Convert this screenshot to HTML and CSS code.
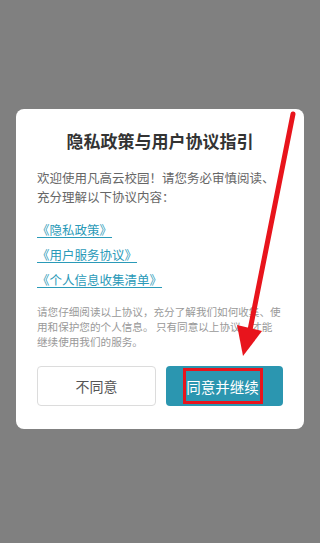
FILE: index.html
```html
<!DOCTYPE html>
<html lang="zh-CN">
<head>
<meta charset="utf-8">
<title>隐私政策与用户协议指引</title>
<link rel="stylesheet" href="styles.css">
</head>
<body>
<div class="screen">
  <div class="card">
    <h1 class="title">隐私政策与用户协议指引</h1>
    <p class="intro">欢迎使用凡高云校园！请您务必审慎阅读、充分理解以下协议内容：</p>
    <ul class="links">
      <li><a class="link" href="#">《隐私政策》</a></li>
      <li><a class="link" href="#">《用户服务协议》</a></li>
      <li><a class="link" href="#">《个人信息收集清单》</a></li>
    </ul>
    <p class="note">请您仔细阅读以上协议，充分了解我们如何收集、使<br>用和保护您的个人信息。 只有同意以上协议，才能<br>继续使用我们的服务。</p>
    <div class="actions">
      <button class="btn btn-decline">不同意</button>
      <button class="btn btn-accept"><span class="mark">同意并继续</span></button>
    </div>
  </div>
  <svg class="arrow" width="320" height="543" viewBox="0 0 320 543">
    <line x1="293" y1="114" x2="250" y2="330" stroke="#e8141c" stroke-width="5" stroke-linecap="round"/>
    <polygon points="237,325 262,331 243,356" fill="#e8141c"/>
  </svg>
</div>
</body>
</html>
```

FILE: styles.css
```css
* { box-sizing: border-box; }
html, body {
  margin: 0;
  padding: 0;
  background: #808080;
}
body {
  font-family: "Noto Sans CJK SC", "Noto Sans", sans-serif;
}
.screen {
  position: relative;
  width: 320px;
  height: 543px;
  padding: 109px 16px 0;
  overflow: hidden;
}
.card {
  background: #fff;
  border-radius: 8px;
  width: 288px;
  height: 320px;
  padding: 20px 21px 22px;
  display: flex;
  flex-direction: column;
}
.title {
  margin: 0;
  font-size: 17px;
  line-height: 24px;
  font-weight: 700;
  color: #333;
  text-align: center;
}
.intro {
  margin: 15px 0 0;
  font-size: 12.5px;
  line-height: 19px;
  color: #666;
}
.links {
  list-style: none;
  margin: 10px 0 0;
  padding: 0;
}
.links li {
  line-height: 25px;
  height: 25px;
}
.link {
  font-size: 12.5px;
  color: #2a9ab8;
  text-decoration: underline;
  text-underline-offset: 2px;
}
.note {
  margin: 13px 0 0;
  font-size: 10.6px;
  line-height: 15px;
  color: #999;
}
.actions {
  margin-top: 17px;
  display: flex;
  gap: 10px;
}
.btn {
  height: 40px;
  border-radius: 4px;
  font-family: inherit;
  font-size: 14px;
  padding: 0;
  display: flex;
  align-items: center;
  justify-content: center;
  white-space: nowrap;
}
.btn-decline {
  width: 119px;
  background: #fff;
  border: 1px solid #dcdcdc;
  color: #555;
}
.btn-accept {
  width: 117px;
  background: #2b96b0;
  border: none;
  color: #fff;
  font-size: 14.5px;
  padding-right: 4px;
}
.mark {
  display: flex;
  align-items: center;
  justify-content: center;
  width: 80px;
  height: 36px;
  border: 3px solid #e8141c;
  white-space: nowrap;
}
.arrow {
  position: absolute;
  left: 0;
  top: 0;
  pointer-events: none;
}
```
